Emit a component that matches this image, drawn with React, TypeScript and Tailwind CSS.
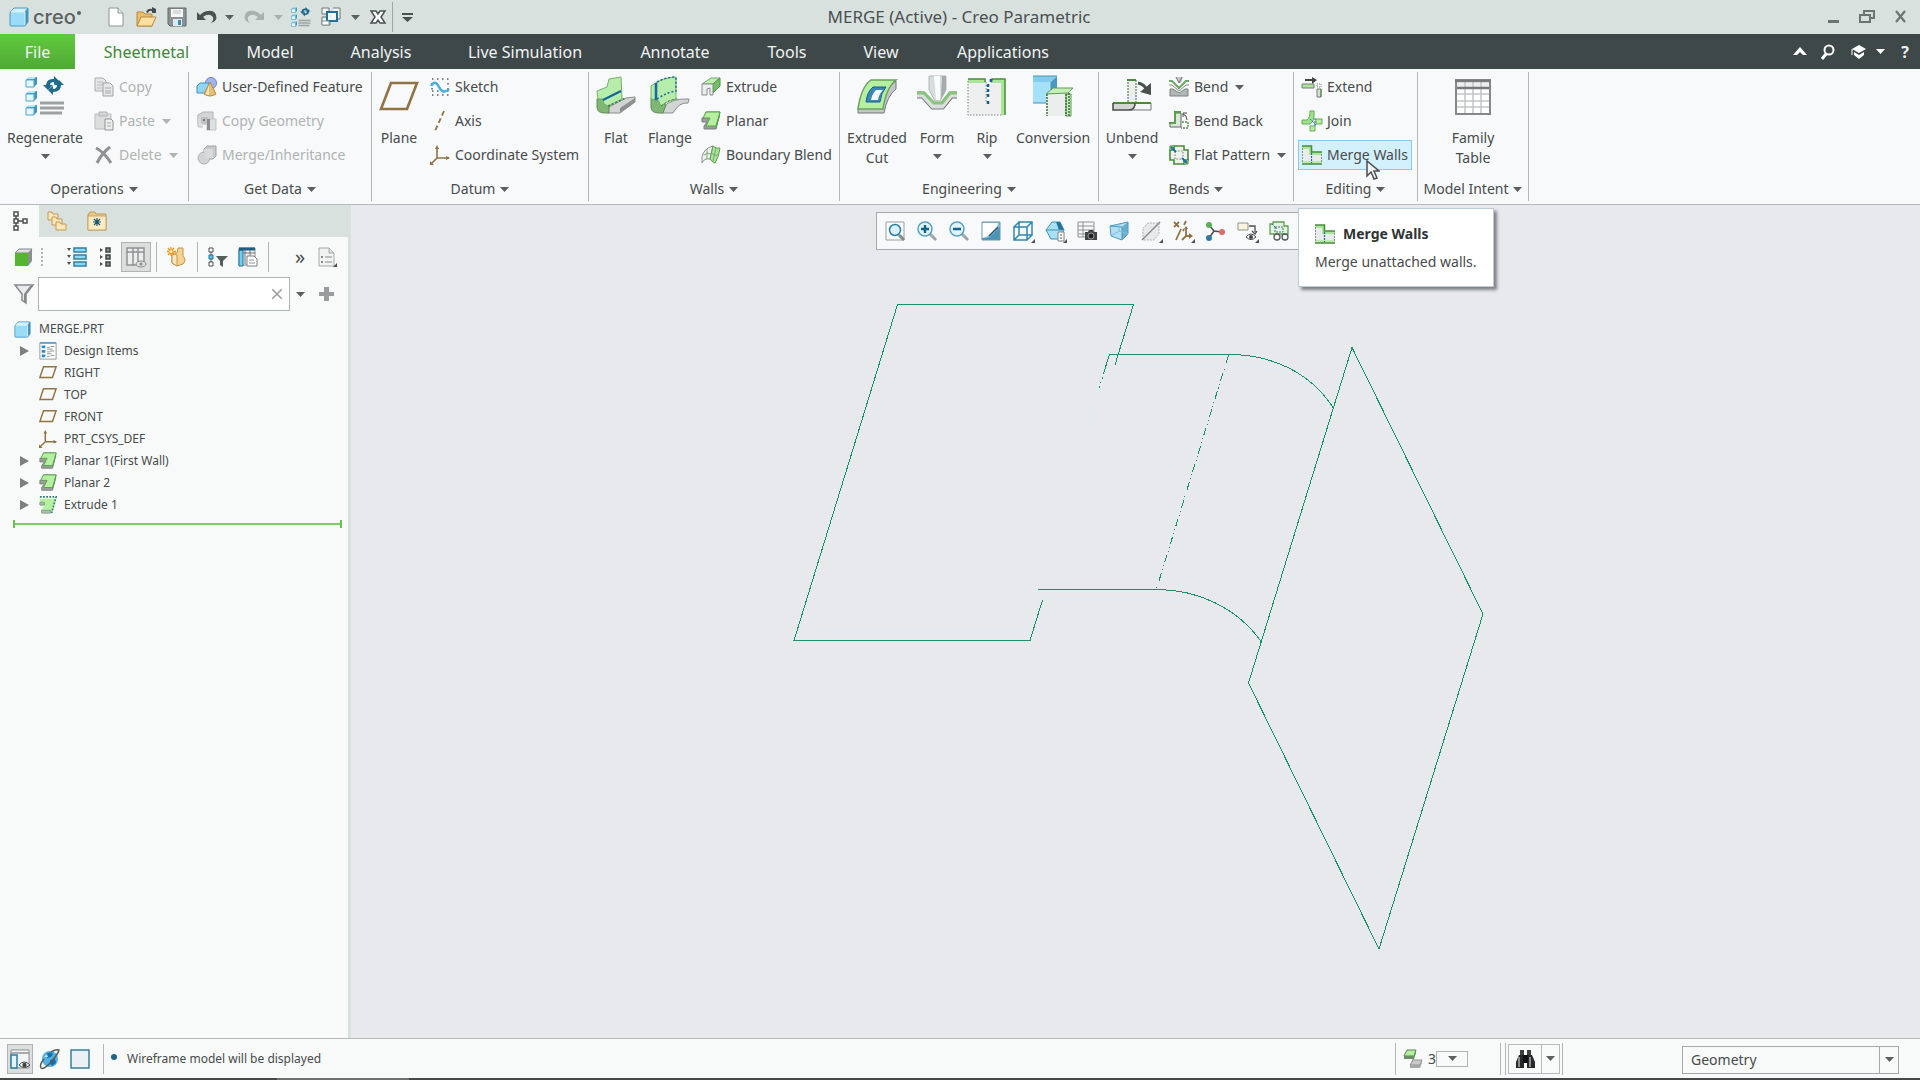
import clsx from 'clsx';
import React, { useState } from 'react';

type IconProps = { name: string; size?: number };

const BROWN = '#8f7344';
const DARK_GREEN = '#4a8a3c';
const LIGHT_GREEN = '#b5f0a0';

const icons: Record<string, React.ReactNode> = {
  cube: (
    <>
      <path d="M1 5 5 1h14l-3 4z" fill="#d5f1fd" />
      <path d="M16 5l3-4v14l-3 4z" fill="#3f8fb8" />
      <rect x="1" y="5" width="15" height="14" rx="1" fill="#9adbf7" />
      <path d="M1 6q0-1 4-5h13q1 0 1 1v13l-3 4H2q-1 0-1-1zM16 5l3-4" fill="none" stroke="#4d9cc4" />
      <path d="M2 5h14v13" fill="none" stroke="#d5f1fd" />
    </>
  ),
  newFile: (
    <>
      <path d="M3 1h9l5 5v13H3z" fill="#fff" stroke="#8d9494" />
      <path d="M12 1v5h5" fill="#e3e6e6" stroke="#8d9494" />
    </>
  ),
  openFile: (
    <>
      <path d="M1 5h6l2 2h7v12H1z" fill="#e9bd6c" stroke="#b98b3c" />
      <path d="M1 19 5 10h15l-4 9z" fill="#fbe0a1" stroke="#b98b3c" />
      <path d="M10 5q2-4 6-3V0l4 2v4h-4V4q-3-1-4 2z" fill="#444b4b" />
    </>
  ),
  saveFile: (
    <>
      <path d="M1 1h18v18H3l-2-2z" fill="#8d9393" stroke="#616868" />
      <rect x="4" y="2" width="12" height="8" fill="#f5f7f7" />
      <path d="M6 4h8M6 6h8" stroke="#b9c0c0" />
      <rect x="6" y="12" width="9" height="7" fill="#d8ecf5" />
      <rect x="11" y="13" width="3" height="5" fill="#4289ae" />
    </>
  ),
  undo: <path d="M0 5v8h9L6 10q5-4 9-1 3 3-1 7 7-2 5-8-2-5-8-4-4 0-8 4z" fill="#4b5252" />,
  redo: <path d="M20 5v8h-9l3-3q-5-4-9-1-3 3 1 7-7-2-5-8 2-5 8-4 4 0 8 4z" fill="#a9b0b0" />,
  regenerate: (
    <>
      {[1, 15, 29].map((y) => (
        <g key={y}>
          <path d={`M1 ${y + 3}l3-3h8v7l-3 3H1z`} fill="#3f97be" />
          <path d={`M1 ${y + 3}h8v7H1z`} fill="#e6f8ff" stroke="#53a5cb" />
          <path d={`M2 ${y + 2}l2-2h7l-2 2z`} fill="#b8e8fb" />
        </g>
      ))}
      <path d="M21 9q1-7 8-6V0l5 5-5 4V6q-4 0-4 3h3l-5 5-5-5z" fill="#1f6a8c" />
      <path d="M36 9q0 7-8 7v3l-5-5 5-4v3q4 0 4-4h-3l5-5 5 5z" fill="#1f6a8c" />
      <path d="M15 27h24M15 32h24M15 37h22" stroke="#9da1a2" strokeWidth="3" />
    </>
  ),
  windows: (
    <>
      <path d="M1 1h7v6H1zM12 1h7v11h-5M1 10h4M1 10v8h8v-3" fill="#f3f5f5" stroke="#6e7777" />
      <rect x="6" y="5" width="10" height="9" fill="#eef8fd" stroke="#1f7199" strokeWidth="2" />
      <path d="M1 14h7v4H1z" fill="#fff" stroke="#8a9292" />
    </>
  ),
  closeX: (
    <path
      d="M3 4h5l2 3 2-3h5l-4 6 4 6h-5l-2-3-2 3H3l4-6z"
      fill="#fff"
      stroke="#4a5151"
      strokeWidth="1.5"
    />
  ),
  customize: <path d="M5 6h11v2H5zM5 10h11l-5.5 5z" fill="#4a5151" />,
  copy: (
    <>
      <path d="M1 1h8l3 3v10H1z" fill="#e6e7e8" stroke="#a9abac" />
      <path d="M3 5h6M3 8h6M3 11h5" stroke="#b5b7b8" />
      <path d="M9 6h7l3 3v10H9z" fill="#e6e7e8" stroke="#9fa1a2" />
      <path d="M11 11h6M11 14h6M11 16h6" stroke="#a9abac" />
    </>
  ),
  paste: (
    <>
      <path d="M1 3h16v15H1z" fill="#dcdddd" stroke="#bcbebf" />
      <path d="M5 1h8v4H5z" fill="#d4d5d6" stroke="#b3b5b6" />
      <path d="M11 8h6l2 2v9h-8z" fill="#eee" stroke="#929495" />
      <path d="M13 12h4M13 15h4" stroke="#a9abac" />
    </>
  ),
  remove: <path d="M2 3q8 4 15 15M16 2Q8 8 3 18" fill="none" stroke="#8f9293" strokeWidth="3" />,
  udf: (
    <>
      <circle cx="14" cy="6" r="5.5" fill="#a3b4ee" stroke="#7183c6" />
      <path d="M0 9l3-3h9v8l-3 2H0z" fill="#8fd6f5" stroke="#3e93bb" />
      <path d="M13 5 7 17q6 4 12 0z" fill="#e9bd72" stroke="#b58a41" />
      <path d="M12 8l-3 9q1 1 3 1z" fill="#fbe6bd" />
    </>
  ),
  copyGeometry: (
    <>
      <path d="M1 4l5-3h10v12H1z" fill="#d3d5d6" stroke="#b1b3b4" />
      <path d="M4 6h7v6H4z" fill="#bfc1c2" />
      <path d="M6 8h2v2H6z" fill="#777" />
      <path d="M10 8h9v11h-9zM1 4v12h5" fill="#dfe0e1" stroke="#c0c2c3" />
      <path d="M10 8h3v11h-3z" fill="#8c8e8f" />
    </>
  ),
  mergeInherit: (
    <>
      <path d="M7 4l3-3h9v10l-3 3H7z" fill="#c6c8c9" stroke="#a2a4a5" />
      <path d="M7 4h9v9H7z" fill="#d9dadb" />
      <circle cx="7" cy="13" r="6" fill="#d1d3d4" stroke="#aeb0b1" />
      <path d="M7 5h8v8H9z" fill="#d9dadb" />
    </>
  ),
  plane: <path d="M12 7h26L28 33H2z" fill="none" stroke={BROWN} strokeWidth="2.6" />,
  planeSmall: <path d="M5 3h14l-4 12H1z" fill="none" stroke={BROWN} strokeWidth="1.6" />,
  sketch: (
    <>
      <path
        d="M2 2h17M2 18h17M2 6v10M18 6v10M2 14h17"
        fill="none"
        stroke="#5a6062"
        strokeDasharray="1.5 3.5"
        strokeWidth="1.5"
      />
      <path d="M1 9q4-7 8 1t10 2" fill="none" stroke="#45aee0" strokeWidth="2.4" />
    </>
  ),
  axis: <path d="M14 0 5 20" stroke={BROWN} strokeWidth="1.8" strokeDasharray="5 3" />,
  csys: (
    <>
      <path d="M7 2v11h12M7 13l-6 6" fill="none" stroke={BROWN} strokeWidth="1.6" />
      <path d="M5 4l2-4 2 4zM16 11l4 2-4 2zM0 16v4h4z" fill={BROWN} />
    </>
  ),
  flat: (
    <>
      <path d="M13 31 30 22l9-1v5L24 37H12z" fill="#d3d5d5" stroke="#8b8e8e" />
      <path d="M24 32l15-10v4L24 37z" fill="#8d9090" />
      <path d="M1 23v8q0 6 8 6h4v-6l2-3-4-5z" fill="#7fb674" stroke="#5b9150" />
      <path d="M2 23l-1-8 10-4 2-8 12-2 1 22-14 7-4-2-1-5z" fill="#b7edaa" stroke="#74b267" />
      <path d="M7 24 25 15" stroke="#12639a" strokeWidth="2" />
      <path d="M12 30l18-8" stroke="#327d42" strokeWidth="1.5" strokeDasharray="2 2" />
    </>
  ),
  flange: (
    <>
      <path d="M13 31q9-9 26-8l-1 4q-9-1-15 10H12z" fill="#d3d5d5" stroke="#8b8e8e" />
      <path d="M1 22v9q0 6 8 6h4l3-8z" fill="#7fb674" stroke="#5b9150" />
      <path d="M1 23V10q12-9 25-9v22q-8 1-15 7l-3-6z" fill="#b7edaa" stroke="#74b267" />
      <path d="M6 7v17" stroke="#1869a4" strokeWidth="2.6" />
      <path d="M7 6q9-5 19-5M7 23q10-7 19-8V1" fill="none" stroke="#1d6fa3" strokeWidth="1.6" strokeDasharray="2 2" />
      <path d="M11 30q9-7 17-7" fill="none" stroke="#327d42" strokeDasharray="2 2" />
    </>
  ),
  extrude: (
    <>
      <path d="M1 7 10 1h9l-7 6z" fill="#bdf2ac" stroke="#73a66a" />
      <path d="M12 7l7-6v8l-7 7z" fill="#72c061" stroke="#578f4b" />
      <path d="M1 7h11v11H9v-7l-3 1v6H1z" fill="#eceeee" stroke="#8a8e8e" />
    </>
  ),
  planar: (
    <>
      <path d="M5 1h14l-4 17H3v-3l3-4H1V7h3z" fill="#9a9e9d" stroke="#7b7f7f" />
      <path d="M5 1h14l-4 14H5l4-8H2z" fill={LIGHT_GREEN} stroke="#58a04b" />
      <path d="M15 16l4-14v3l-4 13z" fill="#5f9654" />
    </>
  ),
  extrudeTree: (
    <>
      <path d="M1 3h18l-4 15H3v-3l3-4H1z" fill={LIGHT_GREEN} />
      <path d="M1 1h18l-5 18" fill="none" stroke="#2f7d68" strokeWidth="1.8" strokeDasharray="2 1.5" />
      <path d="M3 16h10v3H3zM1 7h5v3H1z" fill="#b8bbbb" stroke="#7b9f7b" />
    </>
  ),
  blend: (
    <>
      <path d="M1 12Q3 3 12 1l-3 13q-6-1-8 4z" fill="#eef3ee" stroke="#8d9292" />
      <path d="M12 1q3 3 7 2-1 9-5 15-2 0-5-4z" fill="#a8e596" stroke="#5ea052" />
      <path d="M3 10q4-3 7-1M6 4v10M10 8q4 3 8 2M15 3l-3 13" fill="none" stroke="#7ea477" />
    </>
  ),
  extrudedCut: (
    <>
      <path d="M1 33v4h26q3-17 12-24V5z" fill="#c3c6c6" stroke="#757878" />
      <path d="M1 33Q4 11 14 4h25Q29 12 26 33z" fill={LIGHT_GREEN} stroke="#6b9f62" strokeWidth="1.5" />
      <path d="M9 26q1-10 7-15h13q-5 6-6 15z" fill="#3b87b8" stroke="#1a5d8a" />
      <path d="M14 24q1-6 5-10h7q-4 4-5 10z" fill="#f4f9fc" />
    </>
  ),
  form: (
    <>
      <path d="M12 0h17v14l-6 11h-5l-6-11z" fill="#d7dcdd" stroke="#b4b9ba" />
      <path d="M17 0h6v24h-4z" fill="#fafbfb" />
      <path d="M25 0h4v14l-5 9z" fill="#a6acad" />
      <path d="M0 19h6l10 11h9l9-11h6" fill="none" stroke="#77797a" strokeWidth="7" />
      <path d="M0 19h6l10 11h9l9-11h6" fill="none" stroke="#dcdede" strokeWidth="5" />
      <path d="M0 17h7l10 10h8l8-10h7" fill="none" stroke="#86c678" strokeWidth="3" />
    </>
  ),
  rip: (
    <>
      <path d="M1 3h17v24h5V3h15v36H1z" fill="#eeefef" />
      <path d="M1 3h17v4H1zM24 3h14v36h-4V7H24z" fill="#a9e697" />
      <path d="M1 3h17v3M24 6l1-3h13v36" fill="none" stroke={DARK_GREEN} strokeWidth="1.5" />
      <path d="M1 5v34h34M19 6v20" fill="none" stroke="#828585" strokeDasharray="1.5 1.5" />
      <path d="M24 3v3M21 8v3M21 13v3M21 18v3M21 25v3" stroke="#125f8f" strokeWidth="2.6" />
    </>
  ),
  conversion: (
    <>
      <path d="M0 0h24l-6 6H0z" fill="#83cdec" />
      <path d="M0 6h18v21H0z" fill="#a5e1fb" />
      <path d="M18 6l6-6v17l-6 9z" fill="#4699c2" />
      <path d="M0 0h24M0 27h14M18 6v12" fill="none" stroke="#4a93b5" />
      <path d="M13 18l7-6h20l-5 6v22H14z" fill="#eceeee" />
      <path d="M13 18l7-6h20l-5 5zM33 18h5v22h-5z" fill="#c4efb8" stroke="#60995a" />
      <path d="M14 18v22M33 18v22M36 17v23" stroke="#3b6d38" strokeWidth="1.5" strokeDasharray="2 1" />
    </>
  ),
  unbend: (
    <>
      <path d="M16 4h8v22h-8z" fill="#ecefec" />
      <path d="M16 26V4h8v22" fill="none" stroke="#3b6d38" strokeDasharray="2 1" />
      <path d="M15 4h9" stroke={DARK_GREEN} strokeWidth="2" />
      <path d="M1 27h22q0 7-6 7H1z" fill="#d2d6d3" />
      <path d="M23 27h16v7H17q6 0 6-7z" fill="#f4f5f5" stroke="#777b7b" />
      <path d="M1 27h38" stroke={DARK_GREEN} strokeWidth="2" />
      <path d="M1 27v7h16q6 0 6-7" fill="none" stroke="#4c504f" strokeWidth="1.6" />
      <path d="M26 7q6 1 9 7" fill="none" stroke="#4a4f50" strokeWidth="3" />
      <path d="M39 7v12l-11-3z" fill="#4a4f50" />
    </>
  ),
  bend: (
    <>
      <path d="M7 0h7l-2 6h-2z" fill="#c3c7c8" />
      <path d="M0 4h3l7 7 7-7h3" fill="none" stroke="#6da862" strokeWidth="2" />
      <path d="M0 8h3l7 6 7-6h3" fill="none" stroke="#888c8d" />
      <path d="M1 12h3l6 4 6-4h3v7H1z" fill="#b3b6b7" stroke="#7c8081" />
      <path d="M7 0l3 6 3-6" fill="none" stroke="#727677" />
    </>
  ),
  bendBack: (
    <>
      <path d="M1 16v-4h5V2h6v14z" fill="#dce6d9" stroke="#5f6b5e" />
      <path d="M0 12h6V1h6" fill="none" stroke="#5aa04b" strokeWidth="2" />
      <path d="M13 11h6v6h-7" fill="none" stroke="#5b8f52" strokeWidth="1.4" strokeDasharray="2 1" />
      <path d="M14 3q4 1 4 6M14 6V2h4" fill="none" stroke="#4a4f50" />
    </>
  ),
  flatPattern: (
    <>
      <path d="M5 1h10v4h4v10h-4v4H5v-4H1V5h4z" fill="#eef2ed" stroke={DARK_GREEN} strokeWidth="1.6" />
      <path d="M1 1h5l-5 5zM14 19l5-5v5z" fill={LIGHT_GREEN} stroke={DARK_GREEN} />
      <path d="M6 6h8v8H6z" fill="none" stroke="#777" strokeDasharray="1.5 1.5" />
      <path d="M2 2l5 5M13 13l5 5" stroke="#1b6fa6" strokeWidth="1.8" />
    </>
  ),
  extend: (
    <>
      <path d="M3 3h9" stroke="#3f4445" strokeWidth="2" />
      <path d="M10 0l5 3-5 4z" fill="#3f4445" />
      <path d="M0 7h12v4H0z" fill="#a9e697" stroke="#777b7b" />
      <path d="M15 7h4v3h-4z" fill="none" stroke="#7a7d7d" strokeDasharray="1 1" />
      <path d="M15 12h4v8h-4z" fill="#d7ded6" stroke="#7a7d7d" />
      <path d="M19 12v8" stroke="#3d9131" />
    </>
  ),
  join: (
    <>
      <path d="M8 0h4q1 10-4 13H0V9h5q3-2 3-9z" fill="#9fe08c" stroke="#67ab59" />
      <path d="M14 8h6v5h-6zM8 15h5v5H8z" fill={LIGHT_GREEN} stroke="#67ab59" />
      <path d="M8 8l6 6M13 7v8" stroke="#1b6fa6" strokeDasharray="2 1" />
    </>
  ),
  mergeWalls: (
    <>
      <path d="M0 1h9v6h11v12H0z" fill="#e9ecea" />
      <path d="M0 1h9v6h11v3H7V4H0z" fill="#a9e697" />
      <path d="M0 19h20v-3H0z" fill="#bdebae" />
      <path d="M0 1h9.500v6H20M0 19h20" fill="none" stroke={DARK_GREEN} strokeWidth="1.6" />
      <path d="M.5 3v15M19.5 9v9" stroke="#8a8d8d" strokeDasharray="2 1" />
      <path d="M9.5 8v10" stroke="#26689a" strokeWidth="1.2" strokeDasharray="2 1" />
    </>
  ),
  familyTable: (
    <>
      <path d="M3 4h34v34H3z" fill="#fff" stroke="#858889" strokeWidth="2" />
      <path d="M4 7h32v5H4z" fill="#eceeee" />
      <path d="M12 6v31M20 6v31M28 6v31M4 18h32M4 25h32M4 31h32" stroke="#c3c5c6" strokeWidth="1.5" />
      <path d="M2 5h36M4 12h32" stroke="#77797a" strokeWidth="2.5" />
    </>
  ),
  treeTab: (
    <>
      <path d="M5 5v10M6 10h7" stroke="#4a4f50" strokeWidth="1.5" />
      <path d="M3 1h4v4H3zM3 8h4v4H3zM3 15h4v4H3zM12 8h4v4h-4z" fill="#fff" stroke="#4a4f50" strokeWidth="1.5" />
    </>
  ),
  folders: (
    <>
      {[
        [1, 1],
        [5, 6],
        [9, 11],
      ].map(([x, y]) => (
        <path
          key={x}
          d={`M${x} ${y}h4l1 2h5v6H${x}z`}
          fill="#fbe7b9"
          stroke="#c39a52"
        />
      ))}
    </>
  ),
  favorites: (
    <>
      <path d="M1 3h1l1-2h5l1 2h10v16H1z" fill="#e7c98c" stroke="#c09a58" />
      <path d="M1 5h18v14H1z" fill="#fdebc2" stroke="#c8a363" />
      <path d="M10 7v8M6 11h8M7 8l6 6M13 8l-6 6" stroke="#1a5874" strokeWidth="1.2" />
    </>
  ),
  greenCube: (
    <>
      <path d="M2 6l4-4h13l-3 4z" fill="#dedfe0" stroke="#828686" />
      <path d="M15 6l4-4v12l-4 5z" fill="#8b8f8f" />
      <path d="M2 6h13v13H2z" fill="#54b52f" />
    </>
  ),
  expandAll: (
    <>
      {[1, 8, 15].map((y) => (
        <g key={y}>
          <path d={`M0 ${y}h4l-2 3z`} fill="#4a4f50" />
          <path d={`M7 ${y}h12v4H7z`} fill="#8fd8f7" stroke="#2f81a8" strokeWidth="1.5" />
        </g>
      ))}
    </>
  ),
  collapseAll: (
    <>
      {[1, 8, 15].map((y) => (
        <g key={y}>
          <path d={`M5 ${y}v4l3-2z`} fill="#4a4f50" />
          <path d={`M11 ${y}h4v4h-4z`} fill="#8d9293" stroke="#3f4445" strokeWidth="1.5" />
        </g>
      ))}
    </>
  ),
  columns: (
    <>
      <path d="M1 1h17v17H1zM1 5h17M7 1v17M12 1v17" fill="#ececec" stroke="#8f9293" strokeWidth="1.5" />
      <ellipse cx="15" cy="17" rx="5" ry="3" fill="#dedede" stroke="#8a8d8e" />
      <circle cx="15" cy="17" r="1.5" fill="#8a8d8e" />
    </>
  ),
  newFeature: (
    <>
      <path d="M5 6h5l1-5h5v8q4 4 0 8l-6 2-5-3z" fill="#f3d294" stroke="#c3964b" />
      <path d="M5 6l5 2v11l-5-3z" fill="#fbe7bf" stroke="#c3964b" />
      <path d="M4 0v9M0 4.5h9M1 1l6 7M7 1 1 8" stroke="#ef9410" strokeWidth="1.3" />
      <circle cx="4" cy="4.5" r="1.5" fill="#fff3c9" />
    </>
  ),
  treeFilter: (
    <>
      <path d="M3 4v12" stroke="#4a4f50" />
      <path d="M1 1h4v4H1zM1 15h4v4H1z" fill="#fff" stroke="#4a4f50" />
      <path d="M1 8h4v4H1z" fill="#5bc4ef" stroke="#1f7199" />
      <path d="M8 9h12l-5 5v6l-3-2v-4z" fill="#575c5d" />
    </>
  ),
  treeColumns: (
    <>
      <path d="M1 1h16v17H1z" fill="#f3f5f5" stroke="#8a8d8e" />
      <path d="M1 3h4v16H1z" fill="#72cdf2" stroke="#1f7199" />
      <path d="M1 2h16" stroke="#1e5f7e" strokeWidth="3" />
      <path d="M7 3v14M12 3v6M5 6h12" stroke="#6d7374" />
      <path d="M9 9h7l3 3v7H9z" fill="#fff" stroke="#7c8081" />
      <path d="M11 13h5M11 16h6" stroke="#8f9293" />
    </>
  ),
  listDoc: (
    <>
      <path d="M2 1h10l5 5v13H2z" fill="#f1f3f3" stroke="#a5a8a9" />
      <path d="M12 1v5h5" fill="#dfe1e1" stroke="#a5a8a9" />
      <path d="M8 10h7M8 15h7" stroke="#85898a" />
      <path d="M4 9h2v2H4zM4 14h2v2H4z" fill="#85898a" />
    </>
  ),
  funnel: (
    <>
      <path d="M1 1h18l-7 9v9l-4-3v-6z" fill="#e9ebec" stroke="#85898a" strokeWidth="1.5" />
      <path d="M10 10l6-8h3l-7 8v9l-2-1z" fill="#85898a" />
    </>
  ),
  plus: <path d="M7 3h5v5h5v4h-5v5H7v-5H2V8h5z" fill="#999d9e" />,
  designItems: (
    <>
      <path d="M1 1h18v18H1z" fill="#fff" stroke="#8f9293" />
      <path d="M1 1h18" stroke="#5aa5c8" strokeWidth="2" />
      <path d="M3 4h4v3H3zM3 9h4v3H3zM3 14h4v3H3z" fill="#2490c9" />
      <path d="M9 6h3M13 5h4M9 8h6M9 11h3M12 10h5M9 13h5M9 16h3M13 15h4" stroke="#85898a" />
    </>
  ),
  zoomFit: (
    <>
      <path d="M1 1h18v18H1z" fill="#fbfcfc" stroke="#9b9fa0" />
      <path d="M14 14l5 5" stroke="#85898a" strokeWidth="3" />
      <circle cx="10" cy="9" r="5.5" fill="#ddf1fa" stroke="#2a7da4" strokeWidth="1.5" />
    </>
  ),
  zoomIn: (
    <>
      <path d="M13 13l6 6" stroke="#a0a4a5" strokeWidth="3" />
      <circle cx="8" cy="8" r="7" fill="#e2f4fc" stroke="#57a2c5" strokeWidth="1.5" />
      <path d="M8 4v8M4 8h8" stroke="#15618a" strokeWidth="2.5" />
    </>
  ),
  zoomOut: (
    <>
      <path d="M13 13l6 6" stroke="#a0a4a5" strokeWidth="3" />
      <circle cx="8" cy="8" r="7" fill="#e2f4fc" stroke="#57a2c5" strokeWidth="1.5" />
      <path d="M4 8h8" stroke="#15618a" strokeWidth="2.5" />
    </>
  ),
  repaint: (
    <>
      <path d="M1 1h18v18H1z" fill="#7fbfdc" />
      <path d="M1 2h16q-1 11-16 15z" fill="#fff" />
      <path d="M1 17q6 1 9-2l9-9v13H1z" fill="#4c94b6" />
      <path d="M1 1h18v18H1z" fill="none" stroke="#6f97ab" />
      <path d="M8 15 17 6" stroke="#1d4f68" strokeWidth="1.5" />
    </>
  ),
  wireCube: (
    <path
      d="M1 6h13v13H1zM6 1h13v13H6zM1 6l5-5M14 6l5-5M14 19l5-5M1 19l5-5"
      fill="none"
      stroke="#2f87b3"
      strokeWidth="1.5"
    />
  ),
  orient: (
    <>
      <path d="M1 9 7 1h8l4 8-4 9H6z" fill="#a9e0f7" stroke="#3f93ba" />
      <path d="M15 1l4 8h-5L11 1z" fill="#27749b" />
      <path d="M1 9h18" stroke="#3f93ba" />
      <path d="M13 11h6v9h-6z" fill="#fff" stroke="#7c8081" />
      <path d="M15 14h2M15 17h2" stroke="#4a4f50" />
    </>
  ),
  savedViews: (
    <>
      <path d="M1 1h16v15H1zM1 5h16M1 9h16M1 13h16M6 1v15" fill="#f6f7f7" stroke="#8f9293" />
      <path d="M8 11h3l1-2h4l1 2h3v8H8z" fill="#3f4445" />
      <circle cx="14" cy="15" r="3" fill="#222" stroke="#999" />
    </>
  ),
  perspective: (
    <>
      <path d="M1 5 19 1v12l-6 6-11-4z" fill="#b3dff3" />
      <path d="M13 6l6-5v12l-6 6z" fill="#6caecb" />
      <path d="M1 5 19 1v12l-6 6-11-4zM13 6v13M1 5l12 1" fill="none" stroke="#4b9abf" />
      <path d="M3 14l8-4 8 3M10 4v6" fill="none" stroke="#7fbedb" />
    </>
  ),
  section: (
    <>
      <path d="M2 7l5-5h11v11l-5 6H2z" fill="#e7e9ea" stroke="#b3b6b7" strokeDasharray="2 1" />
      <path d="M1 19 19 1" stroke="#888c8d" strokeWidth="1.5" />
    </>
  ),
  datumDisplay: (
    <>
      <path
        d="M1 1l5 5M6 1 1 6M13 0l-2 4M8 8l-5 11M10 10l1-2M13 7v8h6M13 15l-4 4"
        fill="none"
        stroke={BROWN}
        strokeWidth="1.8"
      />
      <path d="M16 12l4 3-4 3zM11 8l2-3 2 3z" fill={BROWN} />
    </>
  ),
  spin: (
    <>
      <path d="M4 4l5 6 8 1M9 10l-5 7" fill="none" stroke="#4a4f50" strokeWidth="1.5" />
      <circle cx="4" cy="4" r="3" fill="#5fae55" />
      <circle cx="17" cy="11" r="3" fill="#e06a66" />
      <circle cx="4" cy="17" r="3" fill="#2d7ba5" />
    </>
  ),
  annotations: (
    <>
      <path d="M1 2h10v7H1z" fill="#fdf5da" stroke="#8f9293" />
      <path d="M12 5h6v6M15 10l3 3 2-3" fill="none" stroke="#4a4f50" strokeWidth="1.3" />
      <path d="M9 16q5-6 10 0-5 5-10 0z" fill="#fff" stroke="#3f4445" />
      <circle cx="14" cy="16" r="2" fill="#3f4445" />
    </>
  ),
  preview: (
    <>
      <path d="M1 3h3V1h11v4h4v8H1z" fill="#e3f3de" stroke="#5fa052" strokeWidth="1.3" />
      <path d="M3 3l5 5M6 6h8v5H6z" fill="none" stroke="#3f6f88" strokeDasharray="2 1" />
      <circle cx="8" cy="16" r="3" fill="#f6f7f7" stroke="#555a5b" strokeWidth="1.3" />
      <circle cx="16" cy="16" r="3" fill="#f6f7f7" stroke="#555a5b" strokeWidth="1.3" />
    </>
  ),
  layout: (
    <>
      <path d="M1 1h18v18H1z" fill="#f3f5f5" stroke="#8f9293" />
      <path d="M1 4h18" stroke="#8f9293" strokeWidth="1.5" />
      <path d="M1 6h6v13H1z" fill="#e2f4fc" stroke="#2a7da4" strokeWidth="1.5" />
      <path d="M9 16q5-6 11 0-6 5-11 0z" fill="#fff" stroke="#3f4445" />
      <circle cx="14.5" cy="16" r="2.2" fill="#3f4445" />
    </>
  ),
  globe: (
    <>
      <circle cx="10" cy="10" r="8" fill="#4fb0e2" />
      <path d="M6 5q4-3 7 0l-2 3-4 1zM10 11l5-1 1 4-4 3-2-3z" fill="#1c6ea6" />
      <path d="M4 8l3-3 1 3z" fill="#bfe6f8" />
      <path d="M1 19q3 2 10-6t8-12q-3-1-8 2M1 19q-2-3 3-9" fill="none" stroke="#555a5b" strokeWidth="1.5" />
    </>
  ),
  square: <path d="M1 1h18v18H1z" fill="#e9f1f4" stroke="#3b7da0" strokeWidth="1.5" />,
  selection: (
    <>
      <path d="M1 7 4 1h9l-2 6z" fill={LIGHT_GREEN} stroke="#5a7f54" />
      <path d="M1 7h10l2-6v3l-2 6H1z" fill="#6b8f64" />
      <path d="M10 10v4" stroke="#888" />
      <path d="M7 16l3-5h9l-2 5z" fill="#c9cbcb" stroke="#8f9293" />
      <path d="M7 16h10l2-5v3l-2 5H7z" fill="#a4a7a7" />
    </>
  ),
  binoculars: (
    <>
      <path d="M5 1h4v5H5zM12 1h4v5h-4z" fill="#3a3e3f" />
      <path d="M4 6h5v13H1v-6zM12 6h5l3 7v6h-8z" fill="#26292a" />
      <path d="M8 6h5v8H8z" fill="#111" />
      <path d="M4 8v10M15 8v10" stroke="#8a8e8f" strokeWidth="2" />
    </>
  ),
  collapse: <path d="M3 13l7-8 7 8h-4l-3-3-3 3z" fill="#fff" />,
  search: (
    <>
      <circle cx="11" cy="8" r="4.5" fill="none" stroke="#fff" strokeWidth="2" />
      <path d="M8 12l-4 5" stroke="#fff" strokeWidth="3" />
    </>
  ),
  learn: (
    <>
      <path d="M11 3l7 4-7 4-7-4z" fill="#fff" />
      <path d="M6 10l5 3 5-3v3l-5 4-5-4z" fill="#fff" />
      <path d="M4 7v6" stroke="#fff" />
    </>
  ),
  minimize: <path d="M5 13h11v3H5z" fill="#6c7373" />,
  restore: (
    <>
      <path d="M7 7V4h10v7h-4" fill="none" stroke="#6c7373" strokeWidth="2" />
      <path d="M3 8h10v7H3z" fill="none" stroke="#6c7373" strokeWidth="2" />
    </>
  ),
  close: <path d="M5 4l9 11M14 4 5 15" stroke="#6c7373" strokeWidth="2.2" />,
};

const largeIcons = [
  'regenerate',
  'plane',
  'flat',
  'flange',
  'extrudedCut',
  'form',
  'rip',
  'conversion',
  'unbend',
  'familyTable',
];

const Icon = ({ name, size = 20 }: IconProps) => (
  <svg
    width={size}
    height={size}
    viewBox={largeIcons.includes(name) ? '0 0 40 40' : '0 0 20 20'}
    className="shrink-0 overflow-visible"
    aria-hidden="true"
  >
    {icons[name]}
  </svg>
);

const Caret = ({ className }: { className?: string }) => (
  <svg
    width="9"
    height="5"
    viewBox="0 0 9 5"
    className={clsx('shrink-0', className || 'text-[#5a5f60]')}
    aria-hidden="true"
  >
    <path d="M0 0h9L4.5 5z" fill="currentColor" />
  </svg>
);

type SmallProps = {
  icon: string;
  label: string;
  caret?: boolean;
  disabled?: boolean;
  active?: boolean;
};

const SmallButton = ({ icon, label, caret, disabled, active }: SmallProps) => (
  <button
    type="button"
    disabled={disabled}
    className={clsx(
      'flex h-[30px] items-center gap-[5px] border px-[3px] text-sm whitespace-nowrap',
      active ? 'border-[#8ccbe8] bg-[#d3f0fd]' : 'border-transparent',
      disabled && 'text-[#b0b3b4]',
    )}
  >
    <Icon name={icon} />
    {label}
    {caret && (
      <Caret
        className={clsx('ml-0.5', disabled ? 'text-[#b0b3b4]' : 'text-[#5a5f60]')}
      />
    )}
  </button>
);

type LargeProps = {
  icon: string;
  label: string;
  width: string;
  caret?: boolean;
};

const LargeButton = ({ icon, label, width, caret }: LargeProps) => (
  <button
    type="button"
    className={clsx(
      'flex flex-col items-center pt-1 text-center text-sm leading-5',
      width,
    )}
  >
    <Icon name={icon} size={40} />
    <span className="mt-3">{label}</span>
    {caret && <Caret className="mt-1.5 text-[#5a5f60]" />}
  </button>
);

type GroupProps = {
  title: string;
  width: string;
  children: React.ReactNode;
};

const Group = ({ title, width, children }: GroupProps) => (
  <section className={clsx('flex shrink-0', width)}>
    <div className="flex min-w-0 flex-1 flex-col">
      <div className="flex h-[106px] pt-[3px]">{children}</div>
      <button
        type="button"
        className="mb-px flex h-7 items-center justify-center gap-[5px] text-sm whitespace-nowrap"
      >
        {title}
        <Caret />
      </button>
    </div>
    <div className="my-[3px] w-px bg-[#b3b7b8]" />
  </section>
);

const Column = ({ children }: { children: React.ReactNode }) => (
  <div className="flex flex-col items-start gap-1">{children}</div>
);

const tabs = [
  { label: 'Model', width: 'w-[104px]' },
  { label: 'Analysis', width: 'w-[118px]' },
  { label: 'Live Simulation', width: 'w-[170px]' },
  { label: 'Annotate', width: 'w-[130px]' },
  { label: 'Tools', width: 'w-[94px]' },
  { label: 'View', width: 'w-[94px]' },
  { label: 'Applications', width: 'w-[150px]' },
];

const treeItems = [
  { icon: 'designItems', label: 'Design Items', branch: true },
  { icon: 'planeSmall', label: 'RIGHT' },
  { icon: 'planeSmall', label: 'TOP' },
  { icon: 'planeSmall', label: 'FRONT' },
  { icon: 'csys', label: 'PRT_CSYS_DEF' },
  { icon: 'planar', label: 'Planar 1(First Wall)', branch: true },
  { icon: 'planar', label: 'Planar 2', branch: true },
  { icon: 'extrudeTree', label: 'Extrude 1', branch: true },
];

const viewTools = [
  { icon: 'zoomFit', label: 'Refit' },
  { icon: 'zoomIn', label: 'Zoom In' },
  { icon: 'zoomOut', label: 'Zoom Out' },
  { icon: 'repaint', label: 'Repaint' },
  { icon: 'wireCube', label: 'Display Style', menu: true },
  { icon: 'orient', label: 'Saved Orientations', menu: true },
  { icon: 'savedViews', label: 'View Manager' },
  { icon: 'perspective', label: 'Perspective View' },
  { icon: 'section', label: 'Section', menu: true },
  { icon: 'datumDisplay', label: 'Datum Display Filters', menu: true },
  { icon: 'spin', label: 'Spin Center' },
  { icon: 'annotations', label: 'Annotation Display', menu: true },
  { icon: 'preview', label: 'Flat Preview' },
];

const IconButton = ({
  icon,
  label,
  className,
  menu,
}: {
  icon: string;
  label: string;
  className?: string;
  menu?: boolean;
}) => (
  <button
    type="button"
    aria-label={label}
    className={clsx('relative flex shrink-0 items-center justify-center', className)}
  >
    <Icon name={icon} />
    {menu && (
      <svg
        width="4"
        height="4"
        viewBox="0 0 4 4"
        className="absolute right-1 bottom-1"
        aria-hidden="true"
      >
        <path d="M4 0v4H0z" fill="#4a4f50" />
      </svg>
    )}
  </button>
);

const TitleBar = () => (
  <header className="flex h-[34px] items-center bg-[#d9e1df]">
    <div className="flex flex-1 items-center">
      <div className="flex w-[101px] items-center pl-[9px]">
        <Icon name="cube" />
        <span className="ml-1 font-[Inter] text-xl leading-6 font-medium text-[#5b6162]">
          creo
        </span>
        <span className="mb-2 ml-px h-1 w-1 rounded-full bg-[#5b6162]" />
      </div>
      <IconButton icon="newFile" label="New" className="w-[30px]" />
      <IconButton icon="openFile" label="Open" className="w-[30px]" />
      <IconButton icon="saveFile" label="Save" className="w-8" />
      <IconButton icon="undo" label="Undo" className="w-7" />
      <Caret className="ml-1 text-[#5a5f60]" />
      <IconButton icon="redo" label="Redo" className="ml-1 w-8" />
      <Caret className="ml-1 text-[#a9b0b0]" />
      <button type="button" aria-label="Regenerate" className="ml-2">
        <Icon name="regenerate" />
      </button>
      <IconButton icon="windows" label="Windows" className="ml-1 w-8" />
      <Caret className="ml-1 text-[#5a5f60]" />
      <IconButton icon="closeX" label="Close" className="ml-1 w-7" />
      <div className="h-[30px] w-px bg-[#9fa6a5]" />
      <IconButton icon="customize" label="Customize" className="w-7" />
    </div>
    <h1 className="text-[17px] leading-6 text-[#4a5051]">
      MERGE (Active) - Creo Parametric
    </h1>
    <div className="flex flex-1 justify-end pr-0.5">
      <IconButton icon="minimize" label="Minimize" className="w-[34px]" />
      <IconButton icon="restore" label="Restore" className="w-[34px]" />
      <IconButton icon="close" label="Close window" className="w-[34px]" />
    </div>
  </header>
);

const TabBar = () => (
  <nav className="flex h-[35px] items-stretch bg-[#3f4849] text-base text-[#f0f3f3]">
    <button
      type="button"
      className="w-[75px] bg-linear-to-b from-[#61cb3e] to-[#4fa935]"
    >
      File
    </button>
    <button type="button" className="w-[143px] bg-[#f7f9fa] text-[#44873a]">
      Sheetmetal
    </button>
    {tabs.map((tab) => (
      <button key={tab.label} type="button" className={tab.width}>
        {tab.label}
      </button>
    ))}
    <div className="ml-auto flex items-center pr-[3px]">
      <IconButton icon="collapse" label="Minimize ribbon" className="w-7" />
      <IconButton icon="search" label="Search" className="w-7" />
      <IconButton icon="learn" label="Learning" className="w-8" />
      <Caret className="mr-2 ml-0.5 text-white" />
      <button type="button" className="w-6 font-bold">
        ?
      </button>
    </div>
  </nav>
);

const Ribbon = () => (
  <div className="flex border-b border-[#b5babb] bg-[#f7f9fa]">
    <Group title="Operations" width="w-[189px]">
      <LargeButton icon="regenerate" label="Regenerate" width="w-[90px]" caret />
      <Column>
        <SmallButton icon="copy" label="Copy" disabled />
        <SmallButton icon="paste" label="Paste" caret disabled />
        <SmallButton icon="remove" label="Delete" caret disabled />
      </Column>
    </Group>
    <Group title="Get Data" width="w-[183px]">
      <div className="pl-1">
        <Column>
          <SmallButton icon="udf" label="User-Defined Feature" />
          <SmallButton icon="copyGeometry" label="Copy Geometry" disabled />
          <SmallButton icon="mergeInherit" label="Merge/Inheritance" disabled />
        </Column>
      </div>
    </Group>
    <Group title="Datum" width="w-[217px]">
      <LargeButton icon="plane" label="Plane" width="w-[54px]" />
      <Column>
        <SmallButton icon="sketch" label="Sketch" />
        <SmallButton icon="axis" label="Axis" />
        <SmallButton icon="csys" label="Coordinate System" />
      </Column>
    </Group>
    <Group title="Walls" width="w-[251px]">
      <LargeButton icon="flat" label="Flat" width="w-[54px]" />
      <LargeButton icon="flange" label="Flange" width="w-[54px]" />
      <Column>
        <SmallButton icon="extrude" label="Extrude" />
        <SmallButton icon="planar" label="Planar" />
        <SmallButton icon="blend" label="Boundary Blend" />
      </Column>
    </Group>
    <Group title="Engineering" width="w-[259px]">
      <LargeButton icon="extrudedCut" label="Extruded Cut" width="w-[74px]" />
      <LargeButton icon="form" label="Form" width="w-[46px]" caret />
      <LargeButton icon="rip" label="Rip" width="w-[54px]" caret />
      <LargeButton icon="conversion" label="Conversion" width="w-[78px]" />
    </Group>
    <Group title="Bends" width="w-[195px]">
      <LargeButton icon="unbend" label="Unbend" width="w-[66px]" caret />
      <Column>
        <SmallButton icon="bend" label="Bend" caret />
        <SmallButton icon="bendBack" label="Bend Back" />
        <SmallButton icon="flatPattern" label="Flat Pattern" caret />
      </Column>
    </Group>
    <Group title="Editing" width="w-[124px]">
      <div className="pl-1">
        <Column>
          <SmallButton icon="extend" label="Extend" />
          <SmallButton icon="join" label="Join" />
          <div className="relative">
            <SmallButton icon="mergeWalls" label="Merge Walls" active />
            <svg
              width="14"
              height="20"
              viewBox="0 0 14 20"
              className="absolute top-5 left-[68px] z-20"
              aria-hidden="true"
            >
              <path
                d="M1 1v15l4-4 3 7 3-1-3-7h5z"
                fill="#f1f2f2"
                stroke="#4a4f50"
                strokeWidth="1.5"
              />
            </svg>
            <div
              role="tooltip"
              className="absolute top-[68px] left-0 z-10 h-[79px] w-[196px] border border-[#bccbd6] bg-white px-4 pt-[13px] shadow-[3px_3px_3px_#7f8487]"
            >
              <div className="flex items-center gap-2 text-sm leading-6 font-bold text-[#2f3334]">
                <Icon name="mergeWalls" />
                Merge Walls
              </div>
              <p className="mt-1 text-sm leading-6 whitespace-nowrap">
                Merge unattached walls.
              </p>
            </div>
          </div>
        </Column>
      </div>
    </Group>
    <Group title="Model Intent" width="w-[111px]">
      <LargeButton icon="familyTable" label="Family Table" width="w-full px-6" />
    </Group>
  </div>
);

const ModelTree = () => {
  const [filter, setFilter] = useState('');

  return (
    <aside className="flex w-[351px] shrink-0 flex-col border-r-[3px] border-[#d9e1df] bg-[#f8faf9]">
      <div className="flex h-8 bg-[#d9e1df]">
        <IconButton icon="treeTab" label="Model Tree" className="w-[39px] bg-[#f8faf9] pl-0.5" />
        <IconButton icon="folders" label="Folder Browser" className="ml-1 w-7" />
        <IconButton icon="favorites" label="Favorites" className="ml-3 w-7" />
      </div>
      <div className="flex h-10 items-center pl-[13px]">
        <IconButton icon="greenCube" label="Model" />
        <div className="ml-2 h-[18px] border-l-2 border-dotted border-[#b3b6b7]" />
        <IconButton icon="expandAll" label="Expand All" className="ml-6" />
        <IconButton icon="collapseAll" label="Collapse All" className="ml-2" />
        <IconButton
          icon="columns"
          label="Tree Columns"
          className="ml-1.5 h-[30px] w-[30px] border border-[#b0b3b3] bg-[#dcdedd]"
        />
        <div className="mx-[5px] h-[30px] w-px bg-[#b3b7b8]" />
        <IconButton icon="newFeature" label="New Feature" className="w-[30px]" />
        <div className="mx-[5px] h-[30px] w-px bg-[#b3b7b8]" />
        <IconButton icon="treeFilter" label="Tree Filters" className="w-[30px]" />
        <IconButton icon="treeColumns" label="Columns" className="w-[30px]" />
        <div className="mx-[5px] h-[30px] w-px bg-[#b3b7b8]" />
        <button type="button" className="ml-[21px] text-xl leading-6">
          »
        </button>
        <IconButton icon="listDoc" label="Settings" className="ml-2 h-7 w-7" menu />
      </div>
      <div className="flex h-[34px] items-center pl-[14px]">
        <Icon name="funnel" />
        <div className="ml-1 flex h-[34px] w-[252px] items-center border border-[#aeb3b4] bg-white">
          <input
            type="text"
            aria-label="Filter tree"
            value={filter}
            onChange={(e) => setFilter(e.target.value)}
            className="h-full min-w-0 flex-1 px-2 text-sm outline-none"
          />
          <button
            type="button"
            aria-label="Clear filter"
            className="flex w-6 justify-center"
            onClick={() => setFilter('')}
          >
            <svg width="10" height="10" viewBox="0 0 10 10" aria-hidden="true">
              <path d="M0 0l10 10M10 0 0 10" stroke="#999d9e" strokeWidth="1.5" />
            </svg>
          </button>
        </div>
        <Caret className="ml-1.5 text-[#5a5f60]" />
        <IconButton icon="plus" label="Add filter" className="ml-3" />
      </div>
      <div className="mt-[7px] text-xs">
        <div className="flex h-[22px] items-center gap-2 pl-[14px]">
          <Icon name="cube" size={17} />
          MERGE.PRT
        </div>
        <ul>
          {treeItems.map((item) => (
            <li key={item.label} className="flex h-[22px] items-center pl-5">
              <svg width="9" height="10" viewBox="0 0 9 10" aria-hidden="true">
                {item.branch && <path d="M0 0l9 5-9 5z" fill="#7b7f80" />}
              </svg>
              <span className="mr-[7px] ml-[10px]">
                <Icon name={item.icon} size={18} />
              </span>
              {item.label}
            </li>
          ))}
        </ul>
        <div className="mt-1 mr-1.5 ml-[13px] flex h-2 items-center border-x-2 border-[#6cbf55]">
          <div className="h-0.5 w-full bg-[#7ccd62]" />
        </div>
      </div>
    </aside>
  );
};

const Wireframe = () => (
  <svg
    viewBox="351 205 1569 833"
    className="absolute inset-0 h-full w-full"
    shapeRendering="crispEdges"
    fill="none"
    aria-hidden="true"
  >
    <path
      d="M907 294h220L1025 629H804M1115 365h125q60 2 92 42M1044 599h114q60 4 90 42M1110 365l-64 234M1318 407l-82 275"
      stroke="#e0edf5"
    />
    <g stroke="#169468">
      <path d="M1115 365l18.500-60.500H897.500L794 640.500h236l12.500-40.500" />
      <path d="M1038 589.500h119c40 0 80 18 104 52" />
      <path d="M1104 372l5.500-17.500H1229c40 0 80 16 104 53" />
      <path d="M1104 372l-5 17" strokeDasharray="2 3" />
      <path d="M1228.500 355 1156.500 589" strokeDasharray="8 3 1 3 1 3" />
      <path d="M1352 347.500 1483 614 1379 949 1248.500 683z" />
    </g>
  </svg>
);

const StatusBar = () => (
  <footer className="shrink-0 border-t border-[#b5babb] bg-[#f8faf9]">
    <div className="flex h-[39px] items-center pl-[7px]">
      <IconButton
        icon="layout"
        label="Toggle navigator"
        className="h-[30px] w-[26px] border border-[#b0b3b3] bg-[#dcdedd]"
      />
      <IconButton icon="globe" label="Browser" className="ml-1 w-[26px]" />
      <IconButton icon="square" label="Full screen" className="ml-1 w-[26px]" />
      <div className="ml-2.5 h-[30px] w-px bg-[#b3b7b8]" />
      <div className="mb-1 ml-[7px] h-1.5 w-1.5 rounded-full bg-[#1e6484]" />
      <p className="ml-[10px] text-xs">Wireframe model will be displayed</p>
      <div className="ml-auto h-8 w-px bg-[#b3b7b8]" />
      <div className="flex w-[104px] items-center pl-[7px]">
        <Icon name="selection" />
        <span className="ml-[5px] text-sm">3</span>
        <button
          type="button"
          aria-label="Selected items"
          className="flex h-4 w-8 items-center justify-center border border-[#b0b3b3]"
        >
          <Caret />
        </button>
      </div>
      <div className="h-8 w-1.5 border-x border-[#b3b7b8]" />
      <div className="mx-0.5 flex h-[30px] border border-[#b8bbbb]">
        <IconButton icon="binoculars" label="Find" className="w-8" />
        <button
          type="button"
          aria-label="Find options"
          className="flex w-[18px] items-center justify-center border-l border-[#b8bbbb]"
        >
          <Caret />
        </button>
      </div>
      <div className="h-8 w-px bg-[#b3b7b8]" />
      <div className="relative mt-0.5 mr-[21px] ml-[119px]">
        <select
          aria-label="Selection filter"
          className="h-7 w-[217px] appearance-none border border-[#a5a9aa] px-2 text-sm"
        >
          <option>Geometry</option>
        </select>
        <span className="pointer-events-none absolute inset-y-0 right-0 flex w-5 items-center justify-center border-l border-[#a5a9aa]">
          <Caret />
        </span>
      </div>
    </div>
    <div className="h-0.5 bg-[#454848] pl-[277px]">
      <div className="h-full w-[132px] bg-[#6d7070]" />
    </div>
  </footer>
);

const App = () => {
  return (
    <div className="flex min-h-screen flex-col bg-[#e7e9ed] font-['Noto_Sans','Open_Sans',sans-serif] text-[#474b4c]">
      <TitleBar />
      <TabBar />
      <Ribbon />
      <main className="flex flex-1">
        <ModelTree />
        <div className="relative flex flex-1 flex-col items-center">
          <Wireframe />
          <div className="relative mt-[7px] flex h-[38px] w-[520px] items-center border border-[#a5a9ac] bg-[#f7f9fa] pl-0.5">
            {viewTools.map((tool) => (
              <IconButton
                key={tool.icon}
                icon={tool.icon}
                label={tool.label}
                menu={tool.menu}
                className="h-8 w-8"
              />
            ))}
          </div>
        </div>
      </main>
      <StatusBar />
    </div>
  );
};

export default App;
